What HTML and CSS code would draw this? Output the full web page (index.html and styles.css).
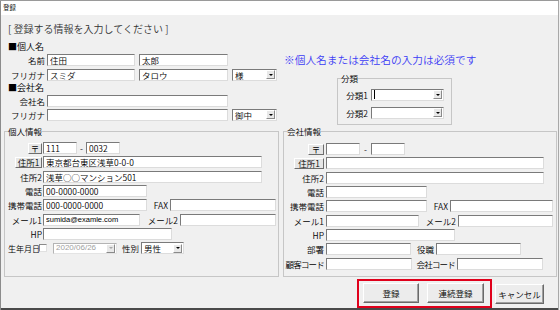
FILE: index.html
```html
<!DOCTYPE html>
<html lang="ja">
<head>
  <meta charset="UTF-8">
  <title>登録</title>
  <link rel="stylesheet" href="styles.css">
</head>
<body>
  <div class="window">
    <div class="titlebar">登録</div>

    <div class="upper">
      <div class="upper-left">
        <div class="heading">[ 登録する情報を入力してください ]</div>

        <div class="section">■個人名</div>
        <div class="row">
          <span class="lbl">名前</span>
          <input class="field sei" type="text" value="住田">
          <input class="field mei" type="text" value="太郎">
        </div>
        <div class="row next">
          <span class="lbl">フリガナ</span>
          <input class="field sei" type="text" value="スミダ">
          <input class="field mei" type="text" value="タロウ">
          <div class="select honorific"><span class="val">様</span><span class="arrow"></span></div>
        </div>

        <div class="section second">■会社名</div>
        <div class="row">
          <span class="lbl">会社名</span>
          <input class="field company-name" type="text" value="">
        </div>
        <div class="row next-small">
          <span class="lbl">フリガナ</span>
          <input class="field company-name" type="text" value="">
          <div class="select honorific"><span class="val">御中</span><span class="arrow"></span></div>
        </div>
      </div>

      <div class="upper-right">
        <div class="note">※個人名または会社名の入力は必須です</div>
        <fieldset class="group category">
          <legend>分類</legend>
          <div class="row">
            <span class="lbl">分類1</span>
            <div class="select cat"><span class="val"><span class="caret"></span></span><span class="arrow"></span></div>
          </div>
          <div class="row cat-next">
            <span class="lbl">分類2</span>
            <div class="select cat"><span class="val"></span><span class="arrow"></span></div>
          </div>
        </fieldset>
      </div>
    </div>

    <div class="groups">
      <fieldset class="group personal">
        <legend>個人情報</legend>
        <div class="row">
          <span class="lbl"><button class="mini-btn zip-btn">〒</button></span>
          <input class="field zip" type="text" value="111">
          <span class="dash">-</span>
          <input class="field zip" type="text" value="0032">
        </div>
        <div class="row">
          <span class="lbl"><button class="mini-btn addr-btn">住所1</button></span>
          <input class="field addr" type="text" value="東京都台東区浅草0-0-0">
        </div>
        <div class="row">
          <span class="lbl">住所2</span>
          <input class="field addr" type="text" value="浅草○○マンション501">
        </div>
        <div class="row">
          <span class="lbl">電話</span>
          <input class="field tel" type="text" value="00-0000-0000">
        </div>
        <div class="row">
          <span class="lbl">携帯電話</span>
          <input class="field tel" type="text" value="000-0000-0000">
          <span class="lbl fax-lbl">FAX</span>
          <input class="field fax" type="text" value="">
        </div>
        <div class="row">
          <span class="lbl">メール1</span>
          <input class="field mail" type="text" value="sumida@examle.com">
          <span class="lbl mail2-lbl">メール2</span>
          <input class="field mail2" type="text" value="">
        </div>
        <div class="row">
          <span class="lbl">HP</span>
          <input class="field hp" type="text" value="">
        </div>
        <div class="row">
          <span class="birth-lbl">生年月日</span>
          <span class="check"></span>
          <div class="select date disabled"><span class="val">2020/06/26</span><span class="arrow"></span></div>
          <span class="lbl gender-lbl">性別</span>
          <div class="select gender"><span class="val">男性</span><span class="arrow"></span></div>
        </div>
      </fieldset>

      <fieldset class="group company">
        <legend>会社情報</legend>
        <div class="row">
          <span class="lbl"><button class="mini-btn zip-btn">〒</button></span>
          <input class="field zip" type="text" value="">
          <span class="dash">-</span>
          <input class="field zip" type="text" value="">
        </div>
        <div class="row">
          <span class="lbl"><button class="mini-btn addr-btn">住所1</button></span>
          <input class="field addr" type="text" value="">
        </div>
        <div class="row">
          <span class="lbl">住所2</span>
          <input class="field addr" type="text" value="">
        </div>
        <div class="row">
          <span class="lbl">電話</span>
          <input class="field tel" type="text" value="">
        </div>
        <div class="row">
          <span class="lbl">携帯電話</span>
          <input class="field tel" type="text" value="">
          <span class="lbl fax-lbl">FAX</span>
          <input class="field fax" type="text" value="">
        </div>
        <div class="row">
          <span class="lbl">メール1</span>
          <input class="field mail" type="text" value="">
          <span class="lbl mail2-lbl">メール2</span>
          <input class="field mail2" type="text" value="">
        </div>
        <div class="row">
          <span class="lbl">HP</span>
          <input class="field hp" type="text" value="">
        </div>
        <div class="row">
          <span class="lbl">部署</span>
          <input class="field dept" type="text" value="">
          <span class="lbl post-lbl">役職</span>
          <input class="field dept" type="text" value="">
        </div>
        <div class="row">
          <span class="lbl tight">顧客コード</span>
          <input class="field code" type="text" value="">
          <span class="lbl code-lbl tight">会社コード</span>
          <input class="field code" type="text" value="">
        </div>
      </fieldset>
    </div>

    <div class="footer">
      <div class="highlight">
        <button class="btn">登録</button>
        <button class="btn wide">連続登録</button>
      </div>
      <button class="btn cancel">キャンセル</button>
    </div>
  </div>
</body>
</html>
```

FILE: styles.css
```css
* {
  box-sizing: border-box;
}

body {
  margin: 0;
  background: #f0f0f0;
  font-family: "Noto Sans CJK JP", "Liberation Sans", sans-serif;
  font-size: 8.5px;
  font-weight: 350;
  color: #000;
}

.window {
  width: 559px;
  height: 310px;
  background: #f0f0f0;
  box-shadow: inset 1px 0 #8c8c8c, inset -1px 0 #a8a8a8, inset 0 -2px #4a4a4a;
}

.titlebar {
  height: 15px;
  background: #fff;
  border-top: 1px solid #9a9a9a;
  padding: 2px 0 0 3px;
  font-size: 6.5px;
  line-height: 8px;
  box-shadow: inset 1px 0 #8c8c8c, inset -1px 0 #a8a8a8;
}

/* top area */
.upper {
  display: flex;
  height: 111px;
}

.upper-left {
  width: 280px;
  padding-left: 8px;
}

.heading {
  margin-top: 7px;
  font-size: 10px;
  line-height: 13px;
  color: #333;
}

.section {
  margin-top: 6px;
  height: 12px;
  line-height: 12px;
  font-size: 9px;
}

.section.second {
  margin-top: 1px;
}

.row {
  display: flex;
  align-items: center;
  height: 13px;
}

.row.next { margin-top: 2px; }
.row.next-small { margin-top: 1px; }

.lbl {
  flex: none;
  display: flex;
  justify-content: flex-end;
  align-items: center;
  padding-right: 2px;
  white-space: nowrap;
  line-height: 12px;
}

.lbl.tight {
  letter-spacing: -0.8px;
}

.upper-left .lbl { width: 39px; }
.upper-left .sei { width: 88px; }
.upper-left .mei { width: 89px; margin-left: 4px; }
.upper-left .company-name { width: 181px; }
.upper-left .honorific { width: 45px; margin-left: 4px; }

.upper-right {
  flex: 1;
  padding-left: 4px;
}

.note {
  margin-top: 38px;
  font-size: 10.7px;
  line-height: 13px;
  color: #3c3cf5;
  white-space: nowrap;
}

/* inputs */
.field {
  flex: none;
  height: 12px;
  margin: 0;
  padding: 0 2px;
  border: 1px solid;
  border-color: #7a7a7a #dcdcdc #dcdcdc #7a7a7a;
  background: #fff;
  font: inherit;
  color: #000;
  outline: none;
}

.field.mail {
  font-family: "Liberation Sans", sans-serif;
  font-size: 7.5px;
  font-weight: 400;
}

.select {
  flex: none;
  display: flex;
  align-items: center;
  height: 12px;
  border: 1px solid;
  border-color: #7a7a7a #dcdcdc #dcdcdc #7a7a7a;
  background: #fff;
}

.select .val {
  flex: 1;
  display: flex;
  align-items: center;
  padding-left: 2px;
  line-height: 10px;
  white-space: nowrap;
  overflow: hidden;
}

.select .arrow {
  flex: none;
  width: 9px;
  height: 9px;
  margin-right: 1px;
  display: flex;
  justify-content: center;
  align-items: center;
  background: #e8e8e8;
  border: 1px solid;
  border-color: #fff #8a8a8a #8a8a8a #fff;
}

.select .arrow::after {
  content: "";
  border-top: 2px solid #000;
  border-left: 2px solid transparent;
  border-right: 2px solid transparent;
}

.select.disabled {
  border-color: #b4b4b4 #e4e4e4 #e4e4e4 #b4b4b4;
  color: #a0a0a0;
}

.select.disabled .val {
  font-family: "Liberation Sans", sans-serif;
  font-size: 8px;
  font-weight: 400;
}

.select.disabled .arrow::after {
  border-top-color: #a8a8a8;
}

.caret {
  width: 1px;
  height: 9px;
  background: #000;
}

/* group boxes */
.group {
  margin: 0;
  padding: 0;
  border: 1px solid #c6c6c6;
  min-width: 0;
}

.group legend {
  margin-left: 3px;
  padding: 0;
  height: 10px;
  line-height: 10px;
}

.category {
  width: 115px;
  height: 52px;
  margin: 7px 0 0 53px;
  padding-top: 5px;
}

.category .lbl { width: 33px; padding-right: 3px; }
.category .cat { width: 73px; }
.category .cat-next { margin-top: 5px; }

.groups {
  display: flex;
  gap: 4px;
  padding-left: 4px;
}

.groups .row {
  height: 14.3px;
}

.personal {
  width: 275px;
  height: 151px;
  padding-top: 5px;
}

.company {
  width: 274px;
  height: 151px;
  padding-top: 6px;
}

.personal .lbl { width: 38px; padding-right: 1px; }
.company .lbl { width: 42px; padding-right: 2px; }

.mini-btn {
  height: 11px;
  margin: 0;
  padding: 0;
  font: inherit;
  line-height: 9px;
  color: #000;
  background: #e6e6e6;
  border: 1px solid;
  border-color: #fff #6e6e6e #6e6e6e #fff;
}

.personal .zip-btn { width: 14px; }
.personal .addr-btn { width: 27px; }
.company .zip-btn { width: 16px; }
.company .addr-btn { width: 30px; }

.dash {
  flex: none;
  width: 9px;
  text-align: center;
}

.company .dash { width: 11px; }

.zip { width: 34px; }

.personal .addr { width: 219px; }
.personal .tel { width: 104px; }
.personal .fax-lbl { width: 23px; padding-right: 2px; }
.personal .fax { width: 106px; }
.personal .mail { width: 97px; }
.personal .mail2-lbl { width: 40px; padding-right: 2px; }
.personal .mail2 { width: 96px; }
.hp { width: 129px; }

.company .addr { width: 218px; }
.company .tel { width: 101px; }
.company .fax-lbl { width: 23px; }
.company .fax { width: 103px; }
.company .mail { width: 93px; }
.company .mail2-lbl { width: 39px; }
.company .mail2 { width: 95px; }
.company .dept { width: 85px; }
.company .post-lbl { width: 25px; }
.company .code { width: 86px; }
.company .code-lbl { width: 45px; }

.birth-lbl {
  flex: none;
  width: 34px;
  padding-left: 3px;
  font-size: 8px;
  white-space: nowrap;
}

.check {
  flex: none;
  width: 8px;
  height: 8px;
  margin-right: 6px;
  background: #fff;
  border: 1px solid;
  border-color: #8a8a8a #e0e0e0 #e0e0e0 #8a8a8a;
}

.personal .date { width: 64px; height: 11px; }
.personal .gender-lbl { width: 24px; padding-right: 2px; }
.personal .gender { width: 43px; }

/* bottom buttons */
.footer {
  display: flex;
  justify-content: flex-end;
  align-items: center;
  margin-top: 2px;
  padding-right: 15px;
}

.highlight {
  display: flex;
  gap: 8px;
  border: 2px solid #e0001b;
  padding: 2px 6px 3px 4px;
}

.btn {
  width: 56px;
  height: 20px;
  margin: 0;
  padding: 0;
  font: inherit;
  color: #000;
  background: #ececec;
  border: 1px solid;
  border-color: #fff #6a6a6a #6a6a6a #fff;
  box-shadow: inset -1px -1px #a0a0a0;
}

.btn.wide { width: 57px; }

.btn.cancel {
  width: 49px;
  margin-left: 3px;
}
```
